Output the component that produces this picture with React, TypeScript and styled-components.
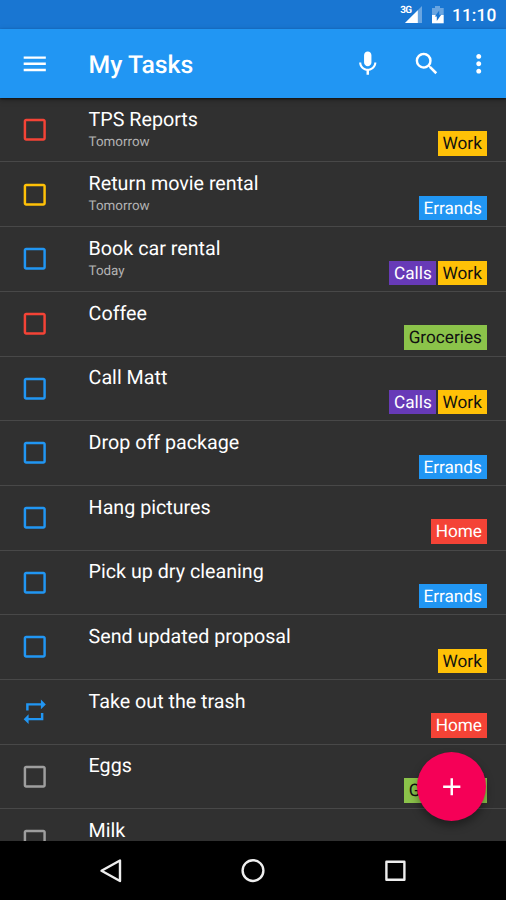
import React from "react";
import styled, { createGlobalStyle } from "styled-components";

const GlobalStyle = createGlobalStyle`
  html, body { margin: 0; padding: 0; background: #000; }
  * { box-sizing: border-box; }
`;

const Screen = styled.div`
  position: relative;
  display: flex;
  flex-direction: column;
  width: 506px;
  height: 900px;
  overflow: hidden;
  background: #303030;
  font-family: Roboto, "Noto Sans", sans-serif;
  color: #fff;
  text-rendering: geometricPrecision;
`;

const StatusBar = styled.header`
  display: flex;
  justify-content: flex-end;
  align-items: flex-start;
  flex: none;
  height: 29.4px;
  padding-right: 9px;
  background: #1976d2;
`;

const StatusIcons = styled.svg`
  flex: none;
  width: 50px;
  height: 29px;
`;

const Network = styled.span`
  margin: 6px -9.5px 0 0;
  font-size: 10px;
  line-height: 10px;
  font-weight: 700;
  letter-spacing: -0.6px;
`;

const Clock = styled.time`
  width: 45px;
  margin-top: 6px;
  font-size: 17.3px;
  line-height: 21px;
  font-weight: 500;
  white-space: nowrap;
  letter-spacing: 0.1px;
`;

const Toolbar = styled.div`
  position: relative;
  z-index: 1;
  display: flex;
  align-items: center;
  flex: none;
  height: 68.7px;
  padding: 0 12.4px 0 19.6px;
  background: #2196f3;
  box-shadow: 0 1px 2px rgba(0, 0, 0, 0.55), 0 2px 6px rgba(0, 0, 0, 0.25);
`;

const Heading = styled.h1`
  flex: 1;
  margin: 5px 0 0 39.4px;
  font-size: 24.8px;
  line-height: 30px;
  font-weight: 500;
`;

const Glyph = styled.svg`
  flex: none;
  display: block;
  width: 29.5px;
  height: 29.5px;
  fill: currentColor;
`;

const Actions = styled.div`
  display: flex;
  gap: 29.2px;
  margin-top: 1px;
  ${Glyph}:last-child { margin-left: -6.4px; }
`;

const List = styled.ul`
  flex: 1;
  min-height: 0;
  margin: 0;
  padding: 0;
  overflow: hidden;
  list-style: none;
`;

const Row = styled.li`
  display: flex;
  height: 64.7px;
  padding: 0 19.5px 0 19.6px;
  background: linear-gradient(#484848, #484848) bottom / 100% 1.3px no-repeat;
`;

const Check = styled.div<{ $color: string }>`
  flex: none;
  width: 69px;
  padding-top: 16.8px;
  color: ${(p) => p.$color};
`;

const Body = styled.div`
  flex: 1;
  padding-top: 9.5px;
  white-space: nowrap;
`;

const Title = styled.div`
  font-size: 19.7px;
  line-height: 24px;
  color: #fff;
`;

const Due = styled.div`
  margin-top: 3px;
  font-size: 13.4px;
  line-height: 16px;
  color: #b3b3b3;
`;

const Tags = styled.div`
  display: flex;
  align-self: flex-end;
  gap: 1.6px;
  margin-bottom: 7.1px;
`;

const Tag = styled.span<{ $bg: string; $fg: string }>`
  height: 24.4px;
  padding: 1px 4.6px 0;
  font-size: 17.2px;
  line-height: 25px;
  background: ${(p) => p.$bg};
  color: ${(p) => p.$fg};
`;

const NavBar = styled.nav`
  display: flex;
  justify-content: center;
  align-items: center;
  gap: 112px;
  flex: none;
  height: 59px;
  background: #000;
`;

const NavIcon = styled.svg`
  width: 30px;
  height: 30px;
  fill: none;
  stroke: #eee;
  stroke-width: 2.4;
  stroke-linejoin: round;
`;

const Fab = styled.button`
  position: absolute;
  right: 19.6px;
  bottom: 79px;
  display: flex;
  align-items: center;
  justify-content: center;
  width: 69px;
  height: 69px;
  padding: 0;
  border: 0;
  border-radius: 50%;
  background: #f50057;
  color: #fff;
  box-shadow: 0 5px 9px rgba(0, 0, 0, 0.36);
`;

const tagStyles: Record<string, [string, string]> = {
  Work: ["#ffc107", "#111"],
  Errands: ["#2196f3", "#fff"],
  Calls: ["#673ab7", "#fff"],
  Groceries: ["#8bc34a", "#111"],
  Home: ["#f44336", "#fff"],
};

const RED = "#f44336";
const AMBER = "#ffc107";
const BLUE = "#2196f3";
const GREY = "#9e9e9e";

interface Task {
  title: string;
  due?: string;
  color: string;
  tags: string[];
  repeat?: boolean;
}

const tasks: Task[] = [
  { title: "TPS Reports", due: "Tomorrow", color: RED, tags: ["Work"] },
  { title: "Return movie rental", due: "Tomorrow", color: AMBER, tags: ["Errands"] },
  { title: "Book car rental", due: "Today", color: BLUE, tags: ["Calls", "Work"] },
  { title: "Coffee", color: RED, tags: ["Groceries"] },
  { title: "Call Matt", color: BLUE, tags: ["Calls", "Work"] },
  { title: "Drop off package", color: BLUE, tags: ["Errands"] },
  { title: "Hang pictures", color: BLUE, tags: ["Home"] },
  { title: "Pick up dry cleaning", color: BLUE, tags: ["Errands"] },
  { title: "Send updated proposal", color: BLUE, tags: ["Work"] },
  { title: "Take out the trash", color: BLUE, tags: ["Home"], repeat: true },
  { title: "Eggs", color: GREY, tags: ["Groceries"] },
  { title: "Milk", color: GREY, tags: [] },
];

const paths = {
  menu: "M3 18h18v-2H3v2zm0-5h18v-2H3v2zm0-7v2h18V6H3z",
  mic: "M12 14c1.66 0 2.99-1.34 2.99-3L15 5c0-1.66-1.34-3-3-3S9 3.34 9 5v6c0 1.66 1.34 3 3 3zm5.3-3c0 3-2.54 5.1-5.3 5.1S6.7 14 6.7 11H5c0 3.41 2.72 6.23 6 6.72V21h2v-3.28c3.28-.48 6-3.3 6-6.72h-1.7z",
  search:
    "M15.5 14h-.79l-.28-.27A6.47 6.47 0 0 0 16 9.5 6.5 6.5 0 1 0 9.5 16c1.61 0 3.09-.59 4.23-1.57l.27.28v.79l5 4.99L20.49 19l-4.99-5zm-6 0C7.01 14 5 11.99 5 9.5S7.01 5 9.5 5 14 7.01 14 9.5 11.99 14 9.5 14z",
  more: "M12 8c1.1 0 2-.9 2-2s-.9-2-2-2-2 .9-2 2 .9 2 2 2zm0 2c-1.1 0-2 .9-2 2s.9 2 2 2 2-.9 2-2-.9-2-2-2zm0 6c-1.1 0-2 .9-2 2s.9 2 2 2 2-.9 2-2-.9-2-2-2z",
  box: "M19 5v14H5V5h14m0-2H5c-1.1 0-2 .9-2 2v14c0 1.1.9 2 2 2h14c1.1 0 2-.9 2-2V5c0-1.1-.9-2-2-2z",
  repeat: "M7 7h10v3l4-4-4-4v3H5v6h2V7zm10 10H7v-3l-4 4 4 4v-3h12v-6h-2v4z",
  add: "M19 13h-6v6h-2v-6H5v-2h6V5h2v6h6v2z",
};

const Icon = ({ name }: { name: keyof typeof paths }) => (
  <Glyph viewBox="0 0 24 24" aria-hidden="true">
    <path d={paths[name]} />
  </Glyph>
);

export default function App() {
  return (
    <>
      <GlobalStyle />
      <Screen>
        <StatusBar>
          <Network>3G</Network>
          <StatusIcons viewBox="0 0 50 29" fill="#fff">
            <path d="M20 6V23H3z" opacity="0.35" />
            <path d="M15.8 10.2V23H3z" />
            <path d="M30 8h3V6h5v2h3.7v7H30z" opacity="0.35" />
            <path d="M30 15h11.7v8.3H30z" />
            <path d="M37.2 10.5v4.3h2l-4.4 6.2v-4.5h-2z" fill="#1976d2" />
          </StatusIcons>
          <Clock>11:10</Clock>
        </StatusBar>
        <Toolbar>
          <Icon name="menu" />
          <Heading>My Tasks</Heading>
          <Actions>
            <Icon name="mic" />
            <Icon name="search" />
            <Icon name="more" />
          </Actions>
        </Toolbar>
        <List>
          {tasks.map((t) => (
            <Row key={t.title}>
              <Check $color={t.color}>
                <Icon name={t.repeat ? "repeat" : "box"} />
              </Check>
              <Body>
                <Title>{t.title}</Title>
                {t.due && <Due>{t.due}</Due>}
              </Body>
              <Tags>
                {t.tags.map((tag) => (
                  <Tag key={tag} $bg={tagStyles[tag][0]} $fg={tagStyles[tag][1]}>
                    {tag}
                  </Tag>
                ))}
              </Tags>
            </Row>
          ))}
        </List>
        <NavBar>
          <NavIcon viewBox="0 0 30 30">
            <path d="M24 4.5v20.5L5.5 14.8z" />
          </NavIcon>
          <NavIcon viewBox="0 0 30 30">
            <circle cx="15" cy="14.6" r="10.4" />
          </NavIcon>
          <NavIcon viewBox="0 0 30 30">
            <rect x="6.4" y="5.8" width="18" height="18" />
          </NavIcon>
        </NavBar>
        <Fab aria-label="Add task">
          <Icon name="add" />
        </Fab>
      </Screen>
    </>
  );
}
